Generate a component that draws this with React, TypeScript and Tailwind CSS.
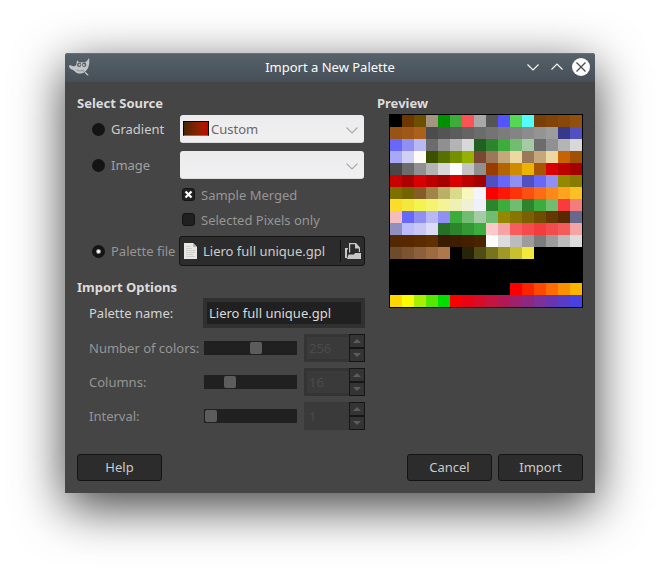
import { useState } from "react";
import type { ReactNode } from "react";

const PALETTE = [
  "000000 6c3800 6c5000 a49480 009000 3cac3c fc5454 a8a8a8 545454 5454fc 54d854 54fcfc 784008 804408 88480c 905010",
  "985414 a05818 ac601c 4c4c4c 545454 5c5c5c 646464 6c6c6c 747474 7c7c7c 848484 8c8c8c 949494 9c9c9c 383888 5050c0",
  "6868f8 9090f4 b8b8f4 6c6c6c 909090 b4b4b4 d8d8d8 206020 2c842c 3cac3c 70bc70 a4cca4 6c6c6c 909090 b4b4b4 d8d8d8",
  "a8a8f8 d0d0f4 fcfcf4 3c5000 587000 749000 94b000 784834 9c7858 c4a87c ecd8a0 9c7858 c4a87c ecd8a0 c86400 a05000",
  "484848 6c6c6c 909090 b4b4b4 d8d8d8 fcfcfc c4c4c4 909090 983c00 b46400 d08c00 ecb400 a85400 d80000 bc0000 a40000",
  "c80000 ac0000 d80000 bc0000 a40000 d80000 bc0000 a40000 5050c0 6868f8 9090f4 5050c0 6868f8 9090f4 948800 887c00",
  "7c7000 746400 845c28 a08448 bcb068 d8dc88 f8f8bc f4f4fc fc0000 fc1804 fc3408 fc5010 fc6c14 fc8818 fca420 fcc024",
  "fcdc28 f4e83c f4f450 f4f470 f4f494 f0f0b4 f0f0d4 f0f0f8 2c842c 3cac3c 70bc70 2c842c 3cac3c 70bc70 f83c3c f47c7c",
  "f4bcbc 6868f8 9090f4 b8b8f4 9090f4 3cac3c 70bc70 a4cca4 70bc70 948800 887400 7c6000 704c00 643800 582800 68688c",
  "9090c0 bcbcf8 c8c8f4 dcdcf4 287028 2c842c 349834 3cac3c fcc8c8 f4a4a4 f85c5c f44c4c f43c3c f44c4c f45c5c f4a4a4",
  "542800 582800 5c2c00 603000 3c1c00 401c00 442000 482400 fcfcfc dcdcdc bcbcbc 9c9c9c 7c7c7c 9c9c9c bcbcbc dcdcdc",
  "6c4c2c 7c5430 8c603c 9c6c40 ac784c 000000 28240c 504c14 78741c a09828 c8c030 f4e83c 000000 000000 000000 000000",
  "000000 000000 000000 000000 000000 000000 000000 000000 000000 000000 000000 000000 000000 000000 000000 000000",
  "000000 000000 000000 000000 000000 000000 000000 000000 000000 000000 000000 000000 000000 000000 000000 000000",
  "000000 000000 000000 000000 000000 000000 000000 000000 000000 000000 fc0000 fc2400 fc4800 fc6c00 fc9000 fcb400",
  "fcd800 fcfc00 a8f000 54e800 00e000 fc0000 e80414 d80c28 c41440 b41854 a0206c 8c2880 7c3098 6834b0 583cc8 4840e0",
].flatMap((row) => row.split(" "));

function GimpLogo() {
  return (
    <svg width="22" height="20" viewBox="0 0 22 20" aria-hidden="true">
      <path
        d="M21 .8C21.6 4 21.4 7.500 20.300 10.300c-.7 1.900-1.800 3.300-3.300 4.200l3.600 3.200-.7 1-4-3.200c-1.600 1-4.200 1.500-6.300.7-1.700-.6-2.600-1.700-3.800-2.800C4.200 12.700 1.300 12 1 9.600.8 8.300 2 7.900 3 8.500c1.500 1 3.500 1.100 5 .1C8.500 7 8.700 5 9.100 3.300c1 1.400 2 2 3.200 2.200 1.500-.2 3-.2 4.300.1C18.600 4.600 20.200 2.900 21 .8z"
        fill="#c3c5c7"
      />
      <ellipse cx="11.200" cy="7.700" rx="2.100" ry="2.200" fill="#596168" />
      <ellipse cx="16.200" cy="7.800" rx="2.100" ry="2.200" fill="#596168" />
      <circle cx="11.500" cy="7.800" r="1" fill="#c3c5c7" />
      <circle cx="15.900" cy="7.900" r="1" fill="#c3c5c7" />
      <path d="M8.500 12.800c2.600 1.500 5 1.400 7.300.2" stroke="#7d858b" strokeWidth=".8" fill="none" />
      <path d="M15.500 14.500l1.800 1.500" stroke="#596168" strokeWidth=".8" />
    </svg>
  );
}

function Chevron({ className, up = false }: { className: string; up?: boolean }) {
  return (
    <svg width="14" height="8" viewBox="0 0 14 8" className={className} fill="none" stroke="currentColor" aria-hidden="true">
      <path d={up ? "M1.500 6.500L7 1l5.500 5.500" : "M1.500 1.500L7 7l5.500-5.500"} strokeWidth="1.100" />
    </svg>
  );
}

function SourceRow({
  id,
  label,
  checked,
  onSelect,
  tone,
  children,
}: {
  id: string;
  label: string;
  checked: boolean;
  onSelect: () => void;
  tone: string;
  children: ReactNode;
}) {
  return (
    <div className="flex items-center pl-[15px]">
      <div className="flex w-[87px] shrink-0 items-center gap-1.5">
        <input
          id={id}
          type="radio"
          name="source"
          checked={checked}
          onChange={onSelect}
          className="size-[13px] shrink-0 appearance-none rounded-full bg-[#141414] checked:bg-[radial-gradient(circle,#fff_0,#fff_1px,#141414_3px)]"
        />
        <label htmlFor={id} className={`whitespace-nowrap ${tone}`}>
          {label}
        </label>
      </div>
      {children}
    </div>
  );
}

function Combo({ label, option, swatch = false }: { label: string; option: string; swatch?: boolean }) {
  return (
    <div className="relative mx-px flex-1">
      <select
        aria-label={label}
        className="block h-7 w-full appearance-none rounded-[3px] border-b border-[#dcdcdc] bg-linear-to-b from-[#ececee] to-[#f0f0f1] pl-[31px] text-[#686868]"
      >
        <option>{option}</option>
      </select>
      {swatch && (
        <span className="pointer-events-none absolute top-1.5 left-[3px] h-[15px] w-[26px] border border-black border-b-[#777] bg-linear-to-r from-[#482400] to-[#c40000]" />
      )}
      <Chevron className="pointer-events-none absolute top-[11px] right-[5px] text-[#a9a9a9]" />
    </div>
  );
}

function Check({ id, label, initial }: { id: string; label: string; initial: boolean }) {
  const [on, setOn] = useState(initial);
  return (
    <div className="flex h-[25px] items-center gap-1.5">
      <span className="relative size-[13px]">
        <input
          id={id}
          type="checkbox"
          checked={on}
          onChange={() => setOn(!on)}
          className="block size-[13px] appearance-none rounded-[3px] border border-[#141414] bg-[#202020]"
        />
        {on && (
          <svg viewBox="0 0 13 13" className="pointer-events-none absolute inset-0" stroke="#fff" strokeWidth="2.200" aria-hidden="true">
            <path d="M3.500 3.500l6 6M9.500 3.500l-6 6" />
          </svg>
        )}
      </span>
      <label htmlFor={id} className="text-[#959595]">
        {label}
      </label>
    </div>
  );
}

function ScaleRow({
  id,
  label,
  value,
  min,
  max,
  frame,
}: {
  id: string;
  label: string;
  value: number;
  min: number;
  max: number;
  frame: string;
}) {
  return (
    <div className="flex h-7 items-center pl-3">
      <label htmlFor={id} className="w-[115px] shrink-0 whitespace-nowrap text-[#959595]">
        {label}
      </label>
      <input
        id={id}
        type="range"
        disabled
        min={min}
        max={max}
        defaultValue={value}
        className="mr-[7px] h-3.5 min-w-0 flex-1 appearance-none bg-[#202020] px-px [&::-webkit-slider-thumb]:size-3 [&::-webkit-slider-thumb]:appearance-none [&::-webkit-slider-thumb]:rounded-[2px] [&::-webkit-slider-thumb]:bg-[#5c5c5c]"
      />
      <div className="flex h-7 w-[61px] shrink-0">
        <input
          type="text"
          aria-label={`${label} value`}
          disabled
          defaultValue={value}
          className={`w-[45px] border-3 border-r-0 bg-[#3a3a3a] pl-0.5 text-[#4b4b4b] ${frame}`}
        />
        <div className="flex w-4 flex-col">
          <button type="button" disabled aria-label="Increase" className="flex flex-1 items-center justify-center border border-[#161616] bg-[#343434]">
            <svg width="8" height="4" viewBox="0 0 8 4" fill="#5c5c5c"><path d="M4 0l4 4H0z" /></svg>
          </button>
          <button type="button" disabled aria-label="Decrease" className="flex flex-1 items-center justify-center border border-[#161616] bg-[#343434]">
            <svg width="8" height="4" viewBox="0 0 8 4" fill="#5c5c5c"><path d="M0 0h8L4 4z" /></svg>
          </button>
        </div>
      </div>
    </div>
  );
}

function DialogButton({ children }: { children: ReactNode }) {
  return (
    <button type="button" className="h-[27px] w-[85px] rounded-[3px] border border-[#141414] bg-[#2c2c2c] pb-px text-[#cacaca]">
      {children}
    </button>
  );
}

export default function App() {
  const [source, setSource] = useState("file");
  return (
    <div className="min-h-screen bg-white px-[65px] pt-[53px] font-['Noto_Sans',sans-serif] text-[13px] leading-[18px] text-[#cccccc]">
      <main className="rounded-t-[3px] bg-[#454545] shadow-[0_14px_50px_rgba(0,0,0,0.75)]">
        <header className="grid h-[29px] grid-cols-[1fr_auto_1fr] items-center rounded-t-[3px] border-t border-[#66717a] bg-linear-to-b from-[#56616a] to-[#464f57] px-[5px] pb-0.5">
          <span className="-ml-0.5">
            <GimpLogo />
          </span>
          <h1 className="text-[#fcfcfc]">Import a New Palette</h1>
          <div className="flex items-center justify-end text-[#fcfcfc]">
            <button type="button" aria-label="Minimize" className="flex w-6 justify-center">
              <Chevron className="" />
            </button>
            <button type="button" aria-label="Maximize" className="flex w-6 justify-center">
              <Chevron className="" up />
            </button>
            <button type="button" aria-label="Close" className="ml-[3px] flex size-[18px] items-center justify-center rounded-full bg-[#fcfcfc]">
              <svg width="10" height="10" viewBox="0 0 10 10" stroke="#454e55" strokeWidth="1.300">
                <path d="M.5.5l9 9M9.500.5l-9 9" />
              </svg>
            </button>
          </div>
        </header>

        <div className="p-3">
          <div className="flex gap-3">
            <div className="min-w-0 flex-1">
              <h2 className="font-bold text-[#dcdcdc]">Select Source</h2>
              <div className="mt-[3px] flex flex-col gap-2">
                <SourceRow id="gradient" label="Gradient" tone="text-[#cccccc]" checked={source === "gradient"} onSelect={() => setSource("gradient")}>
                  <Combo label="Gradient choice" option="Custom" swatch />
                </SourceRow>
                <SourceRow id="image" label="Image" tone="text-[#a0a0a0]" checked={source === "image"} onSelect={() => setSource("image")}>
                  <Combo label="Image choice" option="" />
                </SourceRow>
              </div>
              <div className="mt-[3px] pl-[105px]">
                <Check id="merged" label="Sample Merged" initial />
                <Check id="selected" label="Selected Pixels only" initial={false} />
              </div>
              <div className="mt-1">
                <SourceRow id="file" label="Palette file" tone="text-[#959595]" checked={source === "file"} onSelect={() => setSource("file")}>
                  <button type="button" className="flex h-[30px] min-w-0 flex-1 items-center rounded-[3px] border border-[#141414] bg-[#2c2c2c] pr-[3px] pl-1">
                    <svg width="13" height="16" viewBox="0 0 13 16" className="shrink-0" aria-hidden="true">
                      <path d="M0 0h9l4 4v12H0z" fill="#e8e8e4" />
                      <path d="M9 0l4 4H9z" fill="#b4b4b0" />
                      <path d="M2 3.500h5M2 5.500h6M2 7.500h9M2 9.500h9M2 11.500h7M2 13.500h9" stroke="#d0d0cc" />
                    </svg>
                    <span className="ml-1.5 flex-1 truncate text-left">Liero full unique.gpl</span>
                    <span className="mr-1 h-[22px] w-px shrink-0 bg-[#111]" />
                    <svg width="16" height="16" viewBox="0 0 16 16" className="shrink-0" fill="#c8c8c8" aria-hidden="true">
                      <path d="M0 5h3v1.500H2V15H0z" />
                      <path d="M4 9.500V0h7l4 4.500V9h-1.200V5.500H10V1.200H5.200v8.300z" />
                      <path d="M3.500 11.500H9l1-1.500h6v6H2z" />
                    </svg>
                  </button>
                </SourceRow>
              </div>

              <h2 className="mt-3 font-bold text-[#dcdcdc]">Import Options</h2>
              <div className="mt-0.5 flex flex-col gap-1.5">
                <div className="flex items-center pl-3">
                  <label htmlFor="name" className="w-[114px] shrink-0 text-[#d4d4d4]">
                    Palette name:
                  </label>
                  <input
                    id="name"
                    type="text"
                    defaultValue="Liero full unique.gpl"
                    className="h-[30px] min-w-0 flex-1 border-4 border-[#303030] bg-[#202020] pl-0.5 text-[#dadada] outline-none"
                  />
                </div>
                <ScaleRow id="colors" label="Number of colors:" value={256} min={0} max={448} frame="border-[#343434]" />
                <ScaleRow id="columns" label="Columns:" value={16} min={0} max={66} frame="border-[#343434]" />
                <ScaleRow id="interval" label="Interval:" value={1} min={1} max={128} frame="border-[#3a3a3a]" />
              </div>
            </div>

            <div className="shrink-0">
              <h2 className="font-bold text-[#dcdcdc]">Preview</h2>
              <div className="mt-0.5 ml-3 grid grid-cols-[repeat(16,12px)] border border-black bg-black">
                {PALETTE.map((c, i) => (
                  <span key={i} className="h-3" style={{ backgroundColor: `#${c}` }} />
                ))}
              </div>
            </div>
          </div>

          <footer className="mt-6 flex items-center gap-1.5">
            <DialogButton>Help</DialogButton>
            <span className="flex-1" />
            <DialogButton>Cancel</DialogButton>
            <DialogButton>Import</DialogButton>
          </footer>
        </div>
      </main>
    </div>
  );
}
